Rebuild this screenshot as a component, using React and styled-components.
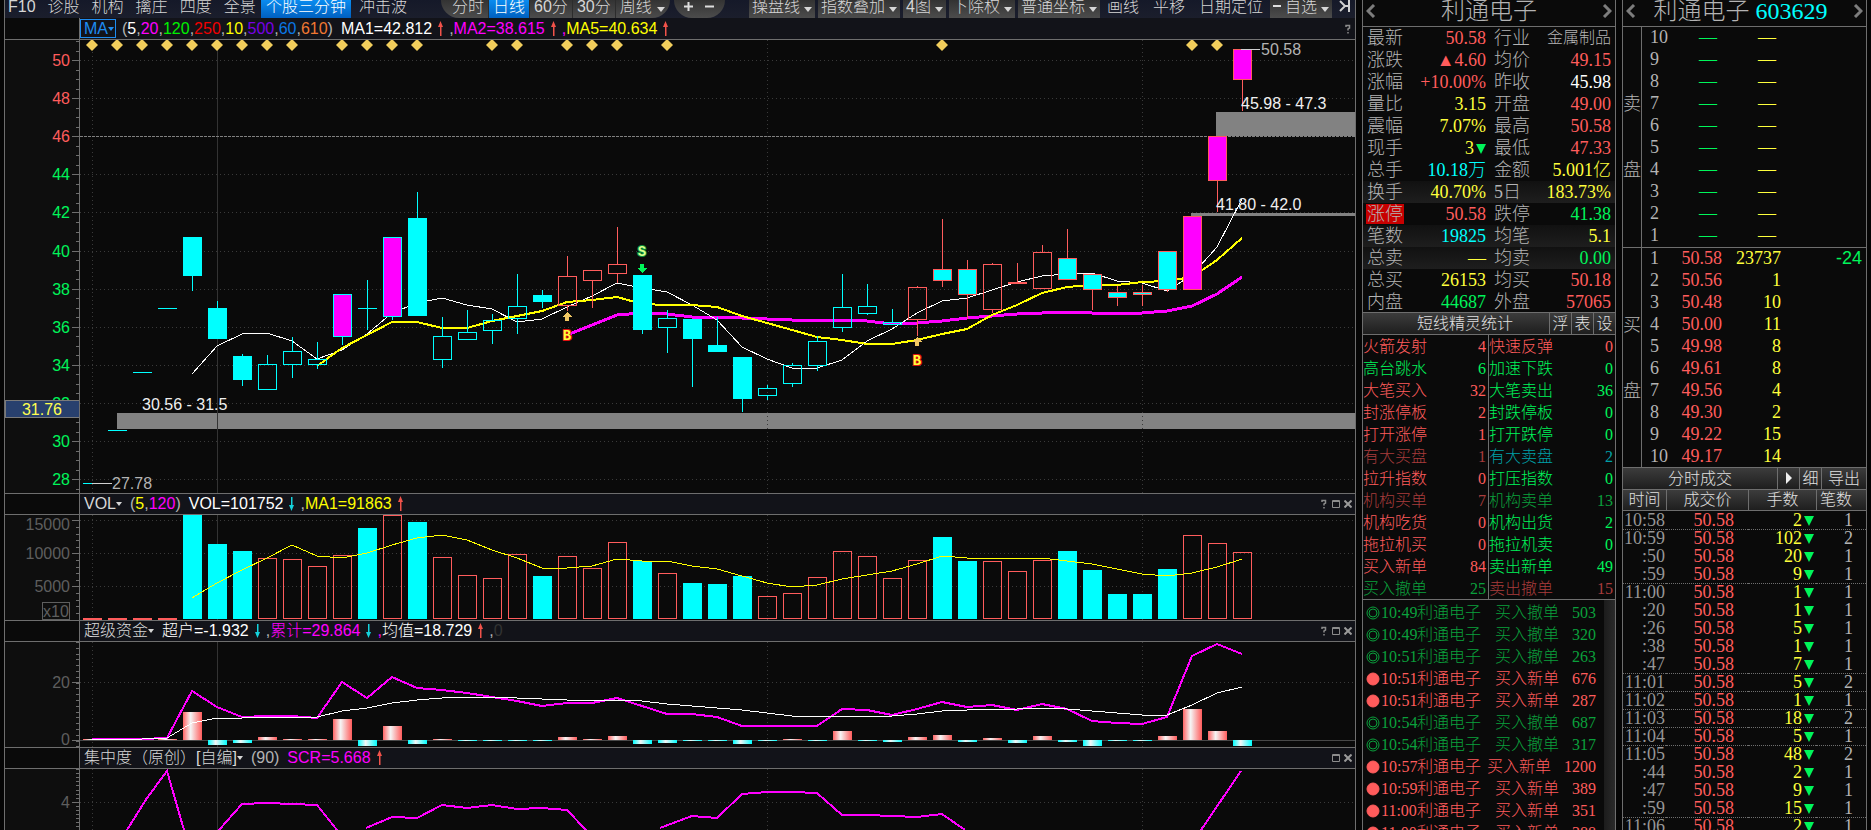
import React from "react";
import styled, { createGlobalStyle, css } from "styled-components";

const RED = "#ff5c5c";
const GREEN = "#00f55a";
const CYAN = "#00ffff";
const YELLOW = "#ffff3c";
const MAGENTA = "#ff00ff";
const GREY = "#b4b4b4";
const LINE = "#6e6e6e";
const DARKGREEN = "#0aa03c";
const DARKRED = "#a83c3c";

const sans = `"Liberation Sans", "Noto Sans CJK SC", sans-serif`;
const serif = `"Liberation Serif", "Noto Sans CJK SC", serif`;

// ---------- chart data (y values in screen units) ----------

// [kind, top, bottom, wickTop, wickBottom]
// c: cyan solid, h: cyan hollow, m: magenta with cyan edge, d: cyan dash
// r: red hollow, x: cyan with red edge, p: magenta with red edge, e: red dash
const candles = [
  ["d", 483, 484], ["d", 430, 431], ["d", 372, 373], ["d", 308, 309],
  ["c", 237, 276, 237, 291], ["c", 308, 339, 301, 339], ["c", 356, 380, 354, 386],
  ["h", 364, 390, 355, 390], ["h", 351, 365, 337, 378], ["h", 359, 365, 342, 369],
  ["m", 294, 337, 294, 345], ["d", 308, 309, 280, 330], ["m", 237, 317, 237, 320],
  ["c", 218, 316, 192, 316], ["h", 336, 360, 317, 368], ["h", 332, 340, 310, 340],
  ["h", 320, 331, 314, 344], ["h", 306, 319, 274, 334], ["c", 295, 302, 290, 308],
  ["r", 276, 306, 256, 311], ["r", 270, 281, 270, 308], ["r", 264, 274, 227, 283],
  ["c", 275, 330, 275, 334], ["h", 318, 328, 310, 353], ["c", 319, 339, 319, 387],
  ["c", 345, 352, 317, 352], ["c", 357, 399, 357, 412], ["h", 388, 396, 385, 400],
  ["h", 365, 384, 363, 387], ["h", 341, 366, 336, 371], ["h", 307, 328, 274, 332],
  ["h", 306, 314, 284, 315], ["h", 322, 325, 309, 325], ["r", 287, 320, 286, 336],
  ["x", 269, 281, 219, 287], ["x", 269, 295, 260, 319], ["r", 264, 310, 263, 313],
  ["e", 282, 284, 263, 284], ["r", 252, 289, 245, 289], ["x", 258, 280, 229, 280],
  ["x", 274, 290, 274, 310], ["x", 292, 298, 286, 306], ["x", 292, 295, 285, 306],
  ["x", 251, 290, 251, 292], ["p", 216, 290, 216, 290], ["p", 136, 181, 136, 212],
  ["p", 49, 80, 49, 111],
];

const ma5 = [
  374, 346, 334, 333, 341, 359, 350, 334, 313, 303, 298, 305, 309, 322, 319, 307,
  296, 283, 288, 292, 305, 320, 347, 359, 368, 368, 360, 341, 329, 313, 301, 298,
  290, 282, 276, 274, 273, 281, 283, 291, 275, 247, 199,
];
const ma10 = [
  366, 348, 335, 322, 322, 328, 328, 321, 316, 311, 302, 300, 297, 304, 305, 305,
  307, 316, 323, 330, 337, 340, 344, 344, 340, 334, 329, 315, 305, 293, 287, 285,
  285, 282, 281, 277, 260, 238,
];
const ma20 = [
  335, 325, 315, 313, 314, 317, 317, 318, 319, 320, 320, 320, 321, 324, 323, 321,
  318, 316, 314, 313, 312, 313, 314, 313, 311, 306, 294, 277,
];

const signals = [0, 1, 2, 3, 4, 5, 6, 7, 8, 10, 11, 12, 13, 16, 17, 19, 20, 21, 23, 34, 44, 45];

const volumes = [
  618, 618, 618, 618, 514, 544, 551, 558, 559, 566, 555, 528, 515, 522, 557, 575,
  578, 554, 576, 556, 568, 542, 561, 573, 583, 584, 576, 596, 593, 577, 551, 556,
  578, 560, 537, 561, 561, 571, 560, 551, 570, 594, 594, 569, 535, 543, 552,
];
const volDown = [4, 5, 6, 11, 13, 18, 22, 24, 25, 26, 34, 35, 39, 40, 41, 42, 43];
const volMa = [
  598, 583, 570, 558, 545, 556, 558, 553, 545, 538, 535, 540, 550, 558, 568, 568,
  566, 559, 561, 561, 566, 569, 576, 583, 587, 585, 579, 575, 571, 564, 556, 558,
  559, 558, 558, 561, 564, 569, 574, 576, 573, 567, 559,
];

const fundBars = [
  1, 1, 1, 1, 28, -5, -3, 3, 1, 1, 21, -6, 14, -4, 1, -1, -1, -1, -1, 3, 1, 4, -4,
  -3, -1, -1, -4, -1, 1, -1, 9, -1, -2, 3, 5, -2, 2, -3, 4, -2, -6, -1, -1, 4, 31, 9, -6,
];
const fundTotal = [
  739, 739, 739, 738, 691, 707, 717, 716, 716, 718, 682, 698, 677, 688, 690, 693,
  697, 701, 706, 703, 703, 698, 706, 714, 714, 717, 726, 726, 726, 726, 709, 710,
  715, 709, 702, 707, 705, 710, 704, 709, 721, 723, 724, 717, 656, 644, 654,
];
const fundAvg = [
  739, 739, 739, 738, 723, 718, 718, 717, 717, 717, 711, 708, 703, 700, 698, 697,
  697, 698, 699, 700, 700, 700, 701, 704, 706, 708, 710, 713, 716, 717, 716, 716,
  716, 714, 711, 710, 709, 709, 708, 709, 711, 713, 715, 715, 705, 693, 687,
];

const scrLine =
  "47,830 67,798 87,771 104,830 M139,830 162,804 187,803 212,804 237,805 257,830 M286,828 312,817 337,818 362,805 387,808 412,805 437,809 462,808 487,810 506,830 M580,828 612,816 637,818 662,794 687,792 712,792 737,793 762,815 787,815 812,816 837,817 862,814 885,830 M1121,830 1161,771";

// ---------- quote data ----------

const quotes = [
  ["最新", "50.58", RED, "行业", "金属制品", GREY],
  ["涨跌", "▲4.60", RED, "均价", "49.15", RED],
  ["涨幅", "+10.00%", RED, "昨收", "45.98", "#fff"],
  ["量比", "3.15", YELLOW, "开盘", "49.00", RED],
  ["震幅", "7.07%", YELLOW, "最高", "50.58", RED],
  ["现手", "3", YELLOW, "最低", "47.33", RED],
  ["总手", "10.18万", CYAN, "金额", "5.001亿", YELLOW],
  ["换手", "40.70%", YELLOW, "5日", "183.73%", YELLOW],
  ["涨停", "50.58", RED, "跌停", "41.38", GREEN],
  ["笔数", "19825", CYAN, "均笔", "5.1", YELLOW],
  ["总卖", "—", YELLOW, "均卖", "0.00", GREEN],
  ["总买", "26153", YELLOW, "均买", "50.18", RED],
  ["内盘", "44687", GREEN, "外盘", "57065", RED],
];
const shadedRows = [7, 9, 10];

const stats = [
  ["火箭发射", 4, RED, "快速反弹", 0, RED],
  ["高台跳水", 6, GREEN, "加速下跌", 0, GREEN],
  ["大笔买入", 32, RED, "大笔卖出", 36, GREEN],
  ["封涨停板", 2, RED, "封跌停板", 0, GREEN],
  ["打开涨停", 1, RED, "打开跌停", 0, GREEN],
  ["有大买盘", 1, DARKRED, "有大卖盘", 2, "#00a0a8"],
  ["拉升指数", 0, RED, "打压指数", 0, GREEN],
  ["机构买单", 7, DARKRED, "机构卖单", 13, DARKGREEN],
  ["机构吃货", 0, RED, "机构出货", 2, GREEN],
  ["拖拉机买", 0, RED, "拖拉机卖", 0, GREEN],
  ["买入新单", 84, RED, "卖出新单", 49, GREEN],
  ["买入撤单", 25, DARKGREEN, "卖出撤单", 15, DARKRED],
];

const alerts = [
  ["10:49", false, 503], ["10:49", false, 320], ["10:51", false, 263],
  ["10:51", true, 676], ["10:51", true, 287], ["10:54", false, 687],
  ["10:54", false, 317], ["10:57", true, 1200], ["10:59", true, 389],
  ["11:00", true, 351], ["11:00", true, 388],
];

const asks = [10, 9, 8, 7, 6, 5, 4, 3, 2, 1];
const bids = [
  ["50.58", 23737, "-24"], ["50.56", 1], ["50.48", 10], ["50.00", 11], ["49.98", 8],
  ["49.61", 8], ["49.56", 4], ["49.30", 2], ["49.22", 15], ["49.17", 14],
];

const ticks = [
  ["10:58", 2, 1], ["10:59", 102, 2], [":50", 20, 1], [":59", 9, 1], ["11:00", 1, 1],
  [":20", 1, 1], [":26", 5, 1], [":38", 1, 1], [":47", 7, 1], ["11:01", 5, 2],
  ["11:02", 1, 1], ["11:03", 18, 2], ["11:04", 5, 1], ["11:05", 48, 2], [":44", 2, 1],
  [":47", 9, 1], [":59", 15, 1], ["11:06", 2, 1],
];

// ---------- chart helpers ----------

const cx = (i) => 12 + i * 25;
const toPoints = (values, start) =>
  values.map((v, i) => `${cx(i + start)},${v}`).join(" ");

const Candle = ({ data, index }) => {
  const [kind, top, bottom, hi, lo] = data;
  const x = cx(index);
  const edge = "rxpe".includes(kind) ? RED : CYAN;
  if (kind === "d" || kind === "e") {
    return (
      <g fill={edge}>
        <rect x={x - 9} y={top} width="19" height={bottom - top} />
        {hi && <rect x={x} y={hi} width="1" height={lo - hi} />}
      </g>
    );
  }
  const fill = { c: CYAN, x: CYAN, m: MAGENTA, p: MAGENTA }[kind] || "none";
  return (
    <g>
      <rect x={x} y={hi} width="1" height={top - hi} fill={edge} />
      <rect x={x} y={bottom} width="1" height={lo - bottom} fill={edge} />
      <rect x={x - 9 + 0.5} y={top + 0.5} width="18" height={bottom - top - 1} fill={fill} stroke={edge} />
    </g>
  );
};

const GridLines = ({ rows, top, bottom }) => (
  <g stroke="#3a3a3a" strokeDasharray="1 3">
    {rows.map((y) => (
      <line key={y} x1="0" x2="100%" y1={y + 0.5} y2={y + 0.5} />
    ))}
    {[0, 27, 42].map((i) => (
      <line key={i} x1={cx(i) + 0.5} x2={cx(i) + 0.5} y1={top} y2={bottom} />
    ))}
    <line x1={cx(5) + 0.5} x2={cx(5) + 0.5} y1={top} y2={bottom} stroke="#333" strokeDasharray="none" />
  </g>
);

const Axis = ({ top, first, step, count, labels, children }) => (
  <AxisSvg>
    <g transform={`translate(0 -${top})`}>
      {Array.from({ length: count }, (_, i) => (
        <rect key={i} x="71" y={Math.round(first + i * step)} width="3" height="1" fill={LINE} />
      ))}
      {labels.map(([text, y, color, ty]) => (
        <g key={text}>
          <rect x="67" y={y} width="7" height="1" fill={LINE} />
          <text x="65" y={(ty || y) + 6} textAnchor="end" fill={color}>
            {text}
          </text>
        </g>
      ))}
      {children}
    </g>
  </AxisSvg>
);

const Arrow = ({ up }) => (
  <ArrowSvg width="7" height="16" viewBox="0 0 7 16" aria-hidden="true">
    {up ? (
      <path d="M3.5 0 L6 6 H4.5 V15 H3 V6 H1 Z" fill="#f0524a" />
    ) : (
      <path d="M3.5 15 L6 9 H4.5 V1 H3 V9 H1 Z" fill="#14d2dc" />
    )}
  </ArrowSvg>
);

const PaneControls = ({ help = true, close = true }) => (
  <Controls>
    {help && (
      <IconButton aria-label="帮助">
        <svg width="8" height="10" viewBox="0 0 8 10" fill="none" stroke="#8c8c8c" strokeWidth="1.5">
          <path d="M2 3V1.5H5.5V4L4 5V6.5M4 8V9.5" />
        </svg>
      </IconButton>
    )}
    {close && (
      <>
        <IconButton aria-label="最大化">
          <svg width="8" height="8" viewBox="0 0 8 8" fill="none" stroke="#8c8c8c">
            <path d="M.5 .5H7.5V7.5H.5ZM.5 1.5H7.5" />
          </svg>
        </IconButton>
        <IconButton aria-label="关闭">
          <svg width="8" height="8" viewBox="0 0 8 8" stroke="#9a9a9a" strokeWidth="2">
            <path d="M.5 .5L7.5 7.5M7.5 .5L.5 7.5" />
          </svg>
        </IconButton>
      </>
    )}
  </Controls>
);

const Chevron = ({ right, label }) => (
  <NavButton aria-label={label}>
    <svg width="10" height="14" viewBox="0 0 10 14" fill="none" stroke="#7d7d7d" strokeWidth="3">
      <path d={right ? "M2 1L8 7L2 13" : "M8 1L2 7L8 13"} />
    </svg>
  </NavButton>
);

// ---------- sections ----------

const TopBar = () => (
  <Toolbar>
    <PlainMenu>
      {["F10", "诊股", "机构", "擒庄", "四度", "全景"].map((t) => (
        <ToolText key={t}>{t}</ToolText>
      ))}
    </PlainMenu>
    <ToolActive>个股三分钟</ToolActive>
    <ToolText>冲击波</ToolText>
    <Pill>
      <Segment>分时</Segment>
      <Segment $active>日线</Segment>
      <Segment>60分</Segment>
      <Segment>30分</Segment>
      <Segment>
        周线
        <Caret />
      </Segment>
    </Pill>
    <ZoomPill>
      <ZoomButton aria-label="放大">
        <svg width="9" height="9"><path d="M4.5 0V9M0 4.5H9" stroke="#ddd" strokeWidth="2" /></svg>
      </ZoomButton>
      <ZoomButton aria-label="缩小">
        <svg width="9" height="9"><path d="M0 4.5H9" stroke="#ddd" strokeWidth="2" /></svg>
      </ZoomButton>
    </ZoomPill>
    <RightTools>
      {["操盘线", "指数叠加", "4图", "下除权", "普通坐标"].map((t) => (
        <DropButton key={t}>
          {t}
          <Caret />
        </DropButton>
      ))}
      <LinkTools>
        <ToolText>画线</ToolText>
        <ToolText>平移</ToolText>
        <ToolText>日期定位</ToolText>
      </LinkTools>
      <DropButton>
        <Minus />
        自选
        <Caret />
      </DropButton>
      <EndButton aria-label="折叠">
        <svg width="12" height="12" fill="none" stroke="#d0d0d0" strokeWidth="2">
          <path d="M1 1L6 6L1 11M10 0V12M10 6H6" />
        </svg>
      </EndButton>
    </RightTools>
  </Toolbar>
);

const MarkText = ({ x, y, fill, edge, children }) => (
  <MarkLabel x={x} y={y} fill={fill} stroke={edge}>
    {children}
  </MarkLabel>
);

const PricePane = () => {
  const prices = Array.from({ length: 12 }, (_, i) => 50 - i * 2);
  const yOf = (p) => Math.round(60 + (50 - p) * 19.05);
  return (
    <Pane $height={454}>
      <Axis
        top={40}
        first={41}
        step={9.525}
        count={48}
        labels={prices.map((p) => [p, yOf(p), p > 45 ? RED : GREEN])}
      >
        <rect x="0" y="400" width="74" height="17" fill="#28406e" stroke="#7a7a7a" />
        <text x="37" y="415" textAnchor="middle" fill="#ffff50">31.76</text>
      </Axis>
      <Plot>
        <g transform="translate(0 -40)">
          <rect x="37" y="413" width="100%" height="16" fill="#828282" />
          <rect x="1136" y="112" width="100%" height="24" fill="#828282" />
          <rect x="1111" y="213" width="100%" height="3" fill="#828282" />
          <GridLines rows={prices.filter((p) => p !== 46).map(yOf)} top={40} bottom={493} />
          <line x1="0" x2="100%" y1="136.5" y2="136.5" stroke="#808080" strokeDasharray="3 1" />
          {signals.map((i) => (
            <path key={i} d={`M${cx(i)} 39 l6 6 -6 6 -6 -6z`} fill="#f2ce5c" shapeRendering="auto" />
          ))}
          <g fill="none">
            <polyline points={toPoints(ma20, 19)} stroke={MAGENTA} strokeWidth="3" />
            <polyline points={toPoints(ma5, 4)} stroke="#fff" />
            <polyline points={toPoints(ma10, 9)} stroke="#ff0" strokeWidth="2" />
          </g>
          {candles.map((c, i) => (
            <Candle key={i} data={c} index={i} />
          ))}
          <path d="M12 483.5H32M1161 49.5H1180" stroke="#d0d0d0" />
          <path d="M487 312l5 5h-3v4h-4v-4h-3z" fill="#f2c864" />
          <path d="M837 337l5 5h-3v4h-4v-4h-3z" fill="#f2c864" />
          <path d="M562 273l5 -5h-3v-4h-4v4h-3z" fill={GREEN} />
          <MarkText x={487} y={340} fill="#ffff3c" edge="#e01010">B</MarkText>
          <MarkText x={837} y={365} fill="#ffff3c" edge="#e01010">B</MarkText>
          <MarkText x={562} y={256} fill="#d8ff8c" edge="#0a8c3c">S</MarkText>
          <text x="62" y="410" fill="#f0f0f0">30.56 - 31.5</text>
          <text x="1161" y="109" fill="#f0f0f0">45.98 - 47.3</text>
          <text x="1136" y="210" fill="#f0f0f0">41.80 - 42.0</text>
          <text x="32" y="489" fill={GREY}>27.78</text>
          <text x="1181" y="55" fill={GREY}>50.58</text>
        </g>
      </Plot>
    </Pane>
  );
};

const VolumePane = () => (
  <Pane $height={106}>
    <Axis
      top={515}
      first={527}
      step={6.6}
      count={14}
      labels={[
        ["15000", 520, "#5e5e5e", 524],
        ["10000", 553, "#5e5e5e"],
        ["5000", 586, "#5e5e5e"],
      ]}
    >
      <rect x="37.5" y="602.5" width="27" height="17" fill="none" stroke="#5e5e5e" />
      <text x="51" y="617" textAnchor="middle" fill="#5e5e5e">x10</text>
    </Axis>
    <Plot>
      <g transform="translate(0 -515)">
        <GridLines rows={[520, 553, 586]} top={515} bottom={620} />
        {volumes.map((top, i) => {
          const down = volDown.includes(i);
          return (
            <rect
              key={i}
              x={cx(i) - 8.5}
              y={top + 0.5}
              width="18"
              height={618 - top}
              fill={down ? CYAN : "none"}
              stroke={down ? CYAN : RED}
            />
          );
        })}
        {volumes.map((top, i) =>
          top === 618 ? <rect key={i} x={cx(i) - 9} y="618" width="19" height="2" fill={RED} /> : null
        )}
        <polyline points={toPoints(volMa, 4)} fill="none" stroke="#ff0" />
      </g>
    </Plot>
  </Pane>
);

const FundPane = () => (
  <Pane $height={106}>
    <Axis
      top={642}
      first={642}
      step={5.8}
      count={19}
      labels={[
        ["20", 682, "#5e5e5e"],
        ["0", 740, "#5e5e5e", 739],
      ]}
    />
    <Plot>
      <defs>
        <linearGradient id="upBar">
          <stop offset="0" stopColor="#ff6464" />
          <stop offset=".4" stopColor="#f5f5f5" />
          <stop offset="1" stopColor="#ff5c5c" />
        </linearGradient>
        <linearGradient id="downBar">
          <stop offset="0" stopColor="#00ffff" />
          <stop offset=".4" stopColor="#f5f5f5" />
          <stop offset="1" stopColor="#00ffff" />
        </linearGradient>
      </defs>
      <g transform="translate(0 -642)">
        <GridLines rows={[682]} top={642} bottom={747} />
        <line x1="0" x2="100%" y1="740.5" y2="740.5" stroke="#484848" />
        {fundBars.map((v, i) => (
          <rect
            key={i}
            x={cx(i) - 9}
            y={v > 0 ? 740 - v : 740}
            width="19"
            height={Math.abs(v)}
            fill={v > 0 ? "url(#upBar)" : "url(#downBar)"}
          />
        ))}
        <polyline points={toPoints(fundTotal, 0)} fill="none" stroke={MAGENTA} strokeWidth="2" />
        <polyline points={toPoints(fundAvg, 0)} fill="none" stroke="#fff" />
      </g>
    </Plot>
  </Pane>
);

const ScrPane = () => (
  <Pane $grow>
    <Axis top={769} first={769} step={4.1} count={16} labels={[["4", 802, "#5e5e5e"]]} />
    <Plot>
      <g transform="translate(0 -769)">
        <GridLines rows={[802]} top={769} bottom={1600} />
        <path d={`M${scrLine}`} fill="none" stroke={MAGENTA} strokeWidth="2" />
      </g>
    </Plot>
  </Pane>
);

const maPeriods = [
  ["5", "#fff"], ["20", MAGENTA], ["120", "#00f000"], ["250", "#f00000"],
  ["10", "#ff0"], ["500", "#7800e6"], ["60", "#0a78e6"], ["610", "#f07832"],
];

const Charts = () => (
  <ChartColumn>
    <TopBar />
    <PaneHeader $tall>
      <HeaderGutter />
      <IndicatorButton $active>
        MA
        <Caret $blue />
      </IndicatorButton>
      <Params>
        (
        {maPeriods.map(([p, color], i) => (
          <React.Fragment key={p}>
            {i > 0 && ","}
            <Tint $color={color}>{p}</Tint>
          </React.Fragment>
        ))}
        )
      </Params>
      <Tint $color="#fff">MA1=42.812</Tint>
      <Arrow up />
      <Tint $color={MAGENTA}><Tint $color={GREY}>,</Tint>MA2=38.615</Tint>
      <Arrow up />
      <Tint $color="#ff0"><Tint $color={MAGENTA}>,</Tint>MA5=40.634</Tint>
      <Arrow up />
      <PaneControls close={false} />
    </PaneHeader>
    <PricePane />
    <PaneHeader>
      <HeaderGutter />
      <IndicatorButton>VOL<Caret /></IndicatorButton>
      <Params>
        (<Tint $color="#ff0">5</Tint>,<Tint $color={MAGENTA}>120</Tint>)
      </Params>
      <Tint $color="#fff">VOL=101752</Tint>
      <Arrow />
      <Tint $color="#ff0"><Tint $color={GREY}>,</Tint>MA1=91863</Tint>
      <Arrow up />
      <PaneControls />
    </PaneHeader>
    <VolumePane />
    <PaneHeader>
      <HeaderGutter />
      <IndicatorButton>超级资金<Caret /></IndicatorButton>
      <Tint $color="#fff">超户=-1.932</Tint>
      <Arrow />
      <Tint $color={MAGENTA}><Tint $color={GREY}>,</Tint>累计=29.864</Tint>
      <Arrow />
      <Tint $color="#fff"><Tint $color={MAGENTA}>,</Tint>均值=18.729</Tint>
      <Arrow up />
      <Tint $color="#333"><Tint $color={GREY}>,</Tint>0</Tint>
      <PaneControls />
    </PaneHeader>
    <FundPane />
    <PaneHeader>
      <HeaderGutter />
      <IndicatorButton>集中度（原创）[自编]<Caret /></IndicatorButton>
      <Params>(90)</Params>
      <Tint $color={MAGENTA}>SCR=5.668</Tint>
      <Arrow up />
      <PaneControls help={false} />
    </PaneHeader>
    <ScrPane />
  </ChartColumn>
);

const QuotePanel = () => (
  <SidePanel>
    <PanelTitle>
      <Chevron label="上一只" />
      <h1>利通电子</h1>
      <Chevron right label="下一只" />
    </PanelTitle>
    <QuoteTable>
      <colgroup>
        <col width="48" />
        <col width="75" />
        <col width="50" />
        <col />
      </colgroup>
      <tbody>
        {quotes.map(([l1, v1, c1, l2, v2, c2], i) => (
          <QuoteRow key={l1} $shaded={shadedRows.includes(i)}>
            <th scope="row">{l1 === "涨停" ? <LimitTag>{l1}</LimitTag> : l1}</th>
            <QuoteValue $color={c1}>
              {v1}
              {l1 === "现手" && <Down />}
            </QuoteValue>
            <th scope="row">{l2}</th>
            <QuoteValue $color={c2} $small={l2 === "行业"}>{v2}</QuoteValue>
          </QuoteRow>
        ))}
      </tbody>
    </QuoteTable>
    <SectionBar>
      <SectionTitle $shift>短线精灵统计</SectionTitle>
      <BarButton>浮</BarButton>
      <BarButton>表</BarButton>
      <BarButton>设</BarButton>
    </SectionBar>
    <StatsGrid>
      {stats.flatMap(([l1, n1, c1, l2, n2, c2]) => [
        <Stat key={l1} $color={c1}><span>{l1}</span><span>{n1}</span></Stat>,
        <Stat key={l2} $color={c2}><span>{l2}</span><span>{n2}</span></Stat>,
      ])}
    </StatsGrid>
    <ScrollBox>
      <AlertList>
        {alerts.map(([time, fresh, n], i) => (
          <AlertRow key={i} $fresh={fresh}>
            <svg width="14" height="14" viewBox="0 0 14 14" fill="none" stroke="currentColor">
              {fresh ? (
                <circle cx="7" cy="7" r="6" fill="currentColor" />
              ) : (
                <>
                  <circle cx="7" cy="7" r="6" />
                  <circle cx="7" cy="7" r="4" />
                </>
              )}
            </svg>
            <time>{time}</time>
            <span>利通电子</span>
            <AlertAction>{fresh ? "买入新单" : "买入撤单"}</AlertAction>
            <span>{n}</span>
          </AlertRow>
        ))}
      </AlertList>
      <ScrollTrack />
    </ScrollBox>
  </SidePanel>
);

const DepthPanel = () => (
  <SidePanel>
    <PanelTitle $code>
      <Chevron label="上一只" />
      <h1>
        利通电子 <Tint $color={CYAN}>603629</Tint>
      </h1>
      <Chevron right label="下一只" />
    </PanelTitle>
    <DepthBlock>
      <DepthSide><span>卖</span><span>盘</span></DepthSide>
      <DepthRows>
        {asks.map((n) => (
          <DepthRow key={n}>
            <span>{n}</span>
            <DepthCell $color={GREEN} $dash>—</DepthCell>
            <DepthCell $color={YELLOW} $dash>—</DepthCell>
            <DepthCell />
          </DepthRow>
        ))}
      </DepthRows>
    </DepthBlock>
    <DepthBlock>
      <DepthSide><span>买</span><span>盘</span></DepthSide>
      <DepthRows>
        {bids.map(([price, vol, diff], i) => (
          <DepthRow key={i}>
            <span>{i + 1}</span>
            <DepthCell $color={RED}>{price}</DepthCell>
            <DepthCell $color={YELLOW}>{vol}</DepthCell>
            <DepthDiff>{diff}</DepthDiff>
          </DepthRow>
        ))}
      </DepthRows>
    </DepthBlock>
    <SectionBar>
      <SectionTitle>分时成交</SectionTitle>
      <BarButton aria-label="播放">
        <svg width="6" height="12"><path d="M0 0L6 6L0 12Z" fill="#eee" /></svg>
      </BarButton>
      <BarButton>细</BarButton>
      <BarButton $wide>导出</BarButton>
    </SectionBar>
    <ScrollBox>
      <TickTable>
        <colgroup>
          <col width="43" />
          <col width="82" />
          <col width="68" />
          <col />
        </colgroup>
        <thead>
          <tr>
            <th>时间</th>
            <th>成交价</th>
            <th>手数</th>
            <th>笔数</th>
          </tr>
        </thead>
        <tbody>
          {ticks.map(([time, lots, count], i) => (
            <TickRow key={i} $minute={i > 0 && time.length === 5}>
              <td>{time}</td>
              <td>50.58</td>
              <td>{lots}<Down /></td>
              <td>{count}</td>
            </TickRow>
          ))}
        </tbody>
      </TickTable>
    </ScrollBox>
  </SidePanel>
);

export default function App() {
  return (
    <>
      <GlobalStyle />
      <Screen>
        <Charts />
        <QuotePanel />
        <DepthPanel />
      </Screen>
    </>
  );
}

// ---------- styles ----------

const GlobalStyle = createGlobalStyle`
  * { box-sizing: border-box; }
  body {
    margin: 0;
    background: #050505;
    color: ${GREY};
    font-family: ${sans};
    font-size: 16px;
    font-weight: 300;
    overflow: hidden;
  }
  button {
    font: inherit;
    color: inherit;
    background: none;
    border: none;
    padding: 0;
    cursor: pointer;
    white-space: nowrap;
  }
`;

const Screen = styled.main`
  display: grid;
  grid-template-columns: minmax(0, 1fr) 254px 245px;
  gap: 6px;
  height: 100vh;
  padding: 0 4px;
  overflow: hidden;
`;

const ChartColumn = styled.section`
  display: flex;
  flex-direction: column;
  min-height: 0;
  border-left: 1px solid ${LINE};
  border-right: 1px solid ${LINE};
`;

const Toolbar = styled.nav`
  display: flex;
  flex-shrink: 0;
  height: 18px;
  overflow: hidden;
  font-size: 16px;
  line-height: 14px;
  color: #d6d6d6;
  background: linear-gradient(#151929, #1b1e2c);
`;

const toolItem = css`
  display: flex;
  align-items: flex-start;
  height: 18px;
  line-height: 14px;
`;

const PlainMenu = styled.div`
  display: flex;
  gap: 12px;
  width: 256px;
  padding-left: 3px;
`;

const ToolText = styled.button`
  ${toolItem}
`;

const ToolActive = styled.button`
  ${toolItem}
  padding: 0 5px;
  margin-right: 8px;
  color: #fff;
  background: linear-gradient(#0a8cf0, #0060c0);
`;

const Pill = styled.div`
  display: flex;
  margin-left: 34px;
  border-radius: 0 0 18px 18px;
  overflow: hidden;
  background: linear-gradient(#333, #4c4c4c);
`;

const Segment = styled.button`
  ${toolItem}
  padding: 0 4px;
  border-right: 1px solid #2c2c2c;
  &:first-child { padding-left: 11px; }
  &:last-child { padding-right: 5px; border: none; }
  ${(p) => p.$active && `color: #fff; background: linear-gradient(#0a8cf0, #0060c0);`}
`;

const ZoomPill = styled.div`
  display: flex;
  justify-content: space-around;
  width: 51px;
  margin-left: 4px;
  padding: 0 5px;
  border-radius: 0 0 18px 18px;
  background: linear-gradient(#333, #4c4c4c);
`;

const ZoomButton = styled.button`
  display: flex;
  padding-top: 2px;
`;

const RightTools = styled.div`
  display: flex;
  gap: 3px;
  margin-left: auto;
`;

const Caret = styled.span`
  display: inline-block;
  flex-shrink: 0;
  align-self: center;
  margin-left: 5px;
  border: 4px solid transparent;
  border-top: 5px solid ${(p) => (p.$blue ? "#1e8cf0" : "#d6d6d6")};
  border-bottom: none;
`;

const DropButton = styled.button`
  ${toolItem}
  padding: 0 3px;
  background: linear-gradient(#333, #4c4c4c);

  ${Caret} {
    margin-left: 4px;
  }
`;

const LinkTools = styled.div`
  display: flex;
  gap: 14px;
  padding: 0 4px;
`;

const EndButton = styled.button`
  display: flex;
  width: 20px;
  justify-content: center;
`;

const Minus = styled.span`
  width: 8px;
  height: 2px;
  margin: 5px 4px 0 0;
  background: #ddd;
`;

const PaneHeader = styled.header`
  display: flex;
  flex-shrink: 0;
  align-items: center;
  height: ${(p) => (p.$tall ? 22 : 21)}px;
  border-bottom: 1px solid ${LINE};
  background: #121319;
  line-height: 18px;
  white-space: nowrap;
`;

const HeaderGutter = styled.span`
  align-self: stretch;
  width: 75px;
  border-right: 1px solid ${LINE};
  background: #0a0a0a;
`;

const IndicatorButton = styled.button`
  display: flex;
  align-items: center;
  height: 19px;
  margin-right: 6px;
  padding: 0 1px 0 3px;
  color: ${(p) => (p.$active ? "#1e8cf0" : "#d8d8d8")};
  border: 1px solid ${(p) => (p.$active ? "#1e8cf0" : "transparent")};

  ${Caret} {
    margin-left: 0;
    border-width: 4px 3px 0;
  }
`;

const Params = styled.span`
  margin-right: 8px;
`;

const Tint = styled.span`
  color: ${(p) => p.$color};
`;

const ArrowSvg = styled.svg`
  flex-shrink: 0;
  margin: 0 5px;
`;

const Controls = styled.span`
  display: flex;
  gap: 4px;
  margin-left: auto;
  padding-right: 3px;
`;

const IconButton = styled.button`
  display: flex;
  align-items: center;
  justify-content: center;
  width: 8px;
  height: 12px;
`;

const Pane = styled.div`
  display: flex;
  min-height: 0;
  border-bottom: 1px solid ${LINE};
  background: #0a0a0a;
  ${(p) => (p.$grow ? "flex: 1; border-bottom: none;" : `flex-shrink: 0; height: ${p.$height}px;`)}
`;

const chartSvg = css`
  display: block;
  height: 100%;
  font-size: 16px;
  shape-rendering: crispEdges;
`;

const AxisSvg = styled.svg`
  ${chartSvg}
  flex-shrink: 0;
  width: 75px;
  border-right: 1px solid ${LINE};
  background: #0e0e0e;
`;

const Plot = styled.svg`
  ${chartSvg}
  flex: 1;
  min-width: 0;
`;

const MarkLabel = styled.text`
  font-family: "Liberation Mono", monospace;
  font-size: 14px;
  font-weight: 700;
  text-anchor: middle;
  stroke-width: 2px;
  paint-order: stroke;
`;

const SidePanel = styled.aside`
  display: flex;
  flex-direction: column;
  min-height: 0;
  border: 1px solid ${LINE};
  border-width: 0 1px;
  background: #0a0a0a;
  font-family: ${serif};
`;

const PanelTitle = styled.header`
  display: flex;
  flex-shrink: 0;
  align-items: center;
  justify-content: space-between;
  height: 27px;
  padding: 0 3px 5px;
  border-bottom: 1px solid ${LINE};

  h1 {
    margin: 0 ${(p) => (p.$code ? 8 : 0)}px 0 0;
    font-size: 24px;
    font-weight: 300;
    line-height: 22px;
  }
`;

const NavButton = styled.button`
  display: flex;
`;

const QuoteTable = styled.table`
  width: 100%;
  flex-shrink: 0;
  table-layout: fixed;
  border-collapse: collapse;
  font-size: 18px;

  th,
  td {
    height: 22px;
    padding: 0;
    line-height: 20px;
    font-weight: 300;
    text-align: left;
    white-space: nowrap;
  }
  th { padding-left: 4px; }
  th + td + th { padding-left: 8px; }
`;

const QuoteRow = styled.tr`
  background: ${(p) => (p.$shaded ? "linear-gradient(#111, #1e1e1e)" : "none")};
`;

const QuoteValue = styled.td`
  && {
    text-align: right;
    color: ${(p) => p.$color};
    font-size: ${(p) => (p.$small ? 16 : 18)}px;
  }
  &:last-child { padding-right: 4px; }
`;

const LimitTag = styled.span`
  display: inline-block;
  margin-left: -1px;
  padding: 0 1px;
  background: #c80000;
`;

const Down = styled.span`
  display: inline-block;
  margin-left: 2px;
  border: 5px solid transparent;
  border-top: 10px solid ${GREEN};
  border-bottom: none;
`;

const SectionBar = styled.div`
  display: flex;
  flex-shrink: 0;
  height: 23px;
  border: 1px solid ${LINE};
  border-width: 1px 0;
  margin-top: -1px;
  background: linear-gradient(#3c3c3c, #1e1e1e);
  color: #e0e0e0;
  line-height: 22px;
`;

const SectionTitle = styled.h2`
  flex: 1;
  margin: 0;
  padding-left: ${(p) => (p.$shift ? 18 : 0)}px;
  font-size: 16px;
  font-weight: 300;
  line-height: 22px;
  text-align: center;
`;

const BarButton = styled.button`
  width: ${(p) => (p.$wide ? 45 : 22)}px;
  border-left: 1px solid ${LINE};
`;

const StatsGrid = styled.div`
  display: grid;
  grid-template-columns: 1fr 1fr;
  flex-shrink: 0;
  border-bottom: 1px solid ${LINE};
`;

const Stat = styled.div`
  display: flex;
  justify-content: space-between;
  height: 22px;
  padding-right: 2px;
  line-height: 23px;
  color: ${(p) => p.$color};
  &:nth-child(odd) { border-right: 1px solid ${LINE}; }
`;

const ScrollBox = styled.div`
  display: flex;
  flex: 1;
  min-height: 0;
  overflow: hidden;
`;

const ScrollTrack = styled.div`
  width: 11px;
  background: linear-gradient(90deg, #1c1c1c, #2a2a2a);
`;

const AlertList = styled.ul`
  flex: 1;
  margin: 0;
  padding: 2px 8px 0 3px;
  list-style: none;
`;

const AlertRow = styled.li`
  display: flex;
  align-items: center;
  height: 22px;
  line-height: 22px;
  color: ${(p) => (p.$fresh ? RED : DARKGREEN)};

  time {
    width: 36px;
    margin-left: 1px;
  }
`;

const AlertAction = styled.span`
  margin: 0 13px 0 auto;
`;

const DepthBlock = styled.div`
  display: flex;
  flex-shrink: 0;
  font-size: 18px;
  border-bottom: 1px solid ${LINE};
  & + & { border-bottom: none; }
`;

const DepthSide = styled.div`
  display: flex;
  flex-direction: column;
  justify-content: center;
  gap: 44px;
  width: 19px;
  border-right: 1px solid ${LINE};
  line-height: 22px;
`;

const DepthRows = styled.div`
  flex: 1;
`;

const DepthRow = styled.div`
  display: grid;
  grid-template-columns: 28px 44px 59px 1fr;
  height: 22px;
  padding: 0 4px 0 8px;
  line-height: 21px;
`;

const DepthCell = styled.span`
  text-align: right;
  color: ${(p) => p.$color};
  padding-right: ${(p) => (p.$dash ? 5 : 0)}px;
`;

const DepthDiff = styled(DepthCell)`
  color: ${GREEN};
  font-family: ${sans};
`;

const TickTable = styled.table`
  width: 100%;
  align-self: flex-start;
  table-layout: fixed;
  border-collapse: separate;
  border-spacing: 0;

  th {
    height: 21px;
    padding: 0;
    font-size: 16px;
    font-weight: 300;
    line-height: 20px;
    color: #e0e0e0;
    border-bottom: 1px solid ${LINE};
    background: linear-gradient(#3c3c3c, #1e1e1e);
  }
  th + th { border-left: 1px solid ${LINE}; }
  th:last-child { text-align: left; padding-left: 3px; }
`;

const TickRow = styled.tr`
  td {
    height: 18px;
    padding: 0;
    font-size: 18px;
    line-height: 17px;
    text-align: right;
    border-top: 1px ${(p) => (p.$minute ? "dotted #6e6e6e" : "solid transparent")};
  }
  td:nth-child(1) { color: #969696; padding-right: 1px; }
  td:nth-child(2) { color: ${RED}; padding-right: 14px; }
  td:nth-child(3) { color: ${YELLOW}; padding-right: 2px; }
  td:nth-child(4) { padding-right: 13px; }
`;
